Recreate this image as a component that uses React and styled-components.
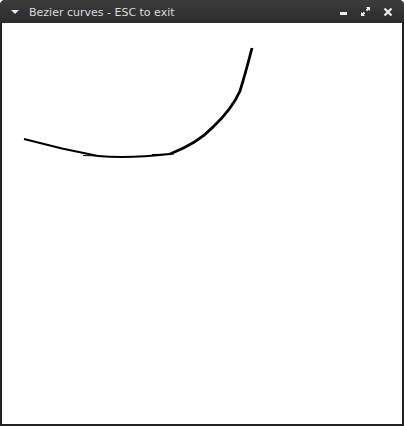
import React from "react";
import styled, { createGlobalStyle } from "styled-components";

const Global = createGlobalStyle`
  html, body { margin: 0; padding: 0; background: #ffffff; }
  #root { width: 404px; height: 426px; }
`;

const Window = styled.div`
  width: 404px;
  height: 426px;
  box-sizing: border-box;
  display: flex;
  flex-direction: column;
  background: #222;
  border-radius: 5px 5px 0 0;
  overflow: hidden;
`;

const TitleBar = styled.div`
  height: 23px;
  flex: none;
  display: flex;
  align-items: center;
  padding: 0 11px 0 10px;
  background: linear-gradient(#3c3c3c, #2b2b2b);
  color: #dcdcdc;
  font-family: "DejaVu Sans", sans-serif;
  font-size: 11px;
`;

const Title = styled.span`
  flex: 1;
  margin-left: 9px;
  white-space: nowrap;
  padding-top: 1px;
`;

const Buttons = styled.div`
  display: flex;
  align-items: center;
  gap: 12px;
`;

const Icon = styled.svg`
  display: block;
  flex: none;
`;

const Body = styled.div`
  flex: 1;
  margin: 0 2px 2px 2px;
  background: #fff;
`;

const Canvas = styled.svg`
  display: block;
  width: 400px;
  height: 401px;
`;

export default function App() {
  return (
    <>
      <Global />
      <Window>
        <TitleBar>
          <Icon width="10" height="8" viewBox="0 0 10 8">
            <path d="M1 2 L9 2 L5 6 Z" fill="#e8e8e8" />
          </Icon>
          <Title>Bezier curves - ESC to exit</Title>
          <Buttons>
            <Icon width="9" height="10" viewBox="0 0 9 10">
              <rect x="1" y="5" width="7" height="3" fill="#eee" />
            </Icon>
            <Icon width="11" height="11" viewBox="0 0 11 11">
              <path d="M6 1 H10 V5 Z M1 6 V10 H5 Z" fill="#eee" />
              <path d="M9 2 L6.5 4.5 M2 9 L4.5 6.5" stroke="#eee" strokeWidth="2" />
            </Icon>
            <Icon width="10" height="10" viewBox="0 0 10 10">
              <path d="M1.5 1.5 L8.5 8.5 M8.5 1.5 L1.5 8.5" stroke="#eee" strokeWidth="2.2" />
            </Icon>
          </Buttons>
        </TitleBar>
        <Body>
          <Canvas viewBox="2 23 400 401">
            <g fill="none" stroke="#000" strokeLinecap="butt">
              <path d="M24 139 L62 148.5 L98 156" strokeWidth="2" />
              <path d="M83 155.5 L100 156" strokeWidth="1" />
              <path d="M98 156 Q130 158.5 170 154" strokeWidth="2" />
              <path d="M152 154.5 L174 154" strokeWidth="1" />
              <path d="M170 154 Q198 143 213 127 Q232 109 240 91 Q245 75 252 48" strokeWidth="2.8" />
            </g>
          </Canvas>
        </Body>
      </Window>
    </>
  );
}
